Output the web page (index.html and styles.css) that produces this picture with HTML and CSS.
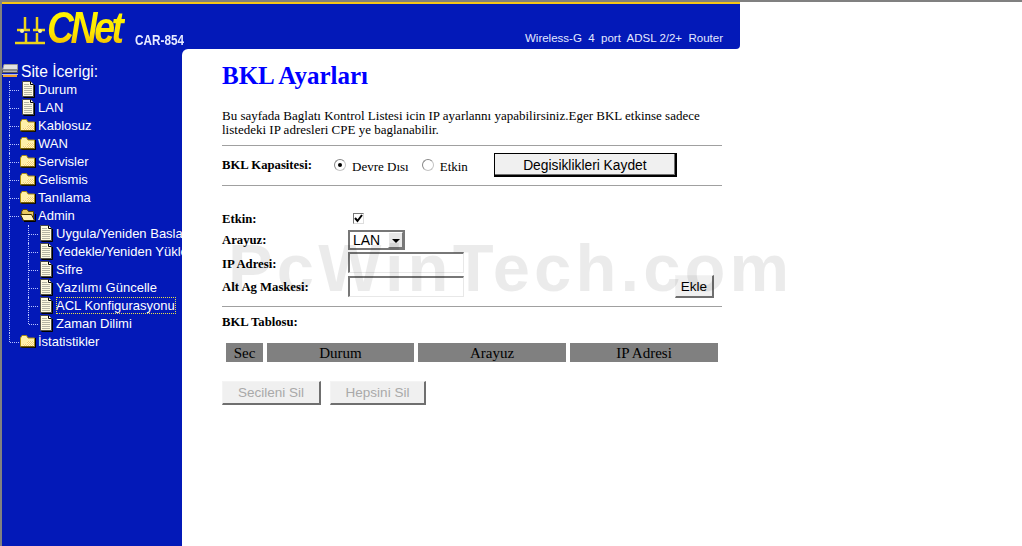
FILE: index.html
```html
<!DOCTYPE html>
<html lang="tr">
<head>
<meta charset="utf-8">
<title>BKL Ayarları</title>
<link rel="stylesheet" href="styles.css">
</head>
<body>
<svg class="defs" width="0" height="0" aria-hidden="true">
  <defs>
    <pattern id="dither" width="2" height="2" patternUnits="userSpaceOnUse">
      <rect width="2" height="2" fill="#fff6c4"/>
      <rect width="1" height="1" fill="#f5cf70"/>
      <rect x="1" y="1" width="1" height="1" fill="#f5cf70"/>
    </pattern>
    <symbol id="doc" viewBox="0 0 13 17">
      <path d="M.5 .5H8.500L11.500 3.500V15.500H.5z" fill="#fffbe0" stroke="#4a4a4a"/>
      <path d="M8.500 .5V3.500H11.500" fill="#fff" stroke="#000"/>
      <path d="M12.500 4V16.500H1.500" fill="none" stroke="#000"/>
      <path d="M2 3.500H7M2 5.500H10M2 7.500H10M2 9.500H10M2 11.500H10M2 13.500H10" stroke="#b4b4a4"/>
    </symbol>
    <symbol id="folder" viewBox="0 0 16 14">
      <path d="M.5 3V11.500H14.500V3H8L6.500 .5H2z" fill="#fff0a8" stroke="#a88c10"/>
      <path d="M7 6H14V11H3V9H7z" fill="url(#dither)"/>
      <path d="M15.500 3V12.500H1.500" fill="none" stroke="#000"/>
      <path d="M.5 12H14.500" stroke="#403000"/>
    </symbol>
    <symbol id="folder-open" viewBox="0 0 16 14">
      <path d="M1.500 3 3 .5H7L8.500 2.500H13.500V11.500H3z" fill="#e8c860" stroke="#5a4800"/>
      <path d="M.5 5.500H11.500L14.500 11.500H3.500z" fill="#fff2b8" stroke="#403000"/>
      <path d="M15.500 5V12.500H4" fill="none" stroke="#000"/>
    </symbol>
  </defs>
</svg>

<header class="banner">
  <div class="logo">
    <svg class="logo-mark" width="32" height="30" viewBox="0 0 32 30" aria-hidden="true">
      <path d="M10 1V14M2 14H15M11 17V27H0M22 1V14M18 14H30M22 17V27H13M11 27H14M22 27H30" fill="none" stroke="#efd418" stroke-width="2.500"/>
      <circle cx="7" cy="15" r="2" fill="#fff79a"/><circle cx="25" cy="15" r="2" fill="#fff79a"/>
    </svg>
    <span class="logo-word">CNet</span>
    <span class="model">CAR-854</span>
  </div>
  <div class="tagline">Wireless-G&nbsp; 4&nbsp; port&nbsp; ADSL 2/2+&nbsp; Router</div>
</header>

<div class="layout">
  <nav class="side">
    <div class="tree-root">
      <svg class="root-icon" width="18" height="14" viewBox="0 0 18 14" aria-hidden="true">
        <path d="M2 .5H15.500V6H.5z" fill="#e2e2e2" stroke="#9a9a9a"/>
        <path d="M.5 6H15.500V8.500H.5z" fill="#b8b8b8" stroke="#5a5a5a"/>
        <path d="M0 10.500H16" stroke="#fff" stroke-opacity=".7"/>
        <path d="M1 12H15" stroke="#f0a030" stroke-width="2"/>
      </svg>
      <span>Site İcerigi:</span>
    </div>
    <ul class="tree">
      <li><svg class="ico-doc"><use href="#doc"/></svg><span>Durum</span></li>
      <li><svg class="ico-doc"><use href="#doc"/></svg><span>LAN</span></li>
      <li><svg class="ico-fold"><use href="#folder"/></svg><span>Kablosuz</span></li>
      <li><svg class="ico-fold"><use href="#folder"/></svg><span>WAN</span></li>
      <li><svg class="ico-fold"><use href="#folder"/></svg><span>Servisler</span></li>
      <li><svg class="ico-fold"><use href="#folder"/></svg><span>Gelismis</span></li>
      <li><svg class="ico-fold"><use href="#folder"/></svg><span>Tanılama</span></li>
      <li class="open"><svg class="ico-fold"><use href="#folder-open"/></svg><span>Admin</span>
        <ul class="tree sub">
          <li><svg class="ico-doc"><use href="#doc"/></svg><span>Uygula/Yeniden Baslat</span></li>
          <li><svg class="ico-doc"><use href="#doc"/></svg><span>Yedekle/Yeniden Yükle</span></li>
          <li><svg class="ico-doc"><use href="#doc"/></svg><span>Sifre</span></li>
          <li><svg class="ico-doc"><use href="#doc"/></svg><span>Yazılımı Güncelle</span></li>
          <li><svg class="ico-doc"><use href="#doc"/></svg><span class="current">ACL Konfigurasyonu</span></li>
          <li><svg class="ico-doc"><use href="#doc"/></svg><span>Zaman Dilimi</span></li>
        </ul>
      </li>
      <li><svg class="ico-fold"><use href="#folder"/></svg><span>İstatistikler</span></li>
    </ul>
  </nav>

  <main class="content">
    <div class="content-inner">
      <h1 class="title">BKL Ayarları</h1>
      <p class="intro">Bu sayfada Baglatı Kontrol Listesi icin IP ayarlannı yapabilirsiniz.Eger BKL etkinse sadece listedeki IP adresleri CPE ye baglanabilir.</p>
      <hr class="rule rule-a">
      <div class="capacity">
        <b class="cap-label">BKL Kapasitesi:</b>
        <label class="radio"><span class="radio-dot on"></span>Devre Dısı</label>
        <label class="radio"><span class="radio-dot"></span>Etkin</label>
        <button class="btn btn-save" type="button">Degisiklikleri Kaydet</button>
      </div>
      <hr class="rule">
      <div class="form">
        <b>Etkin:</b>
        <div class="cell"><span class="check"><svg width="9" height="9" viewBox="0 0 9 9" aria-hidden="true"><path d="M1 4 3.500 7 8 1" fill="none" stroke="#000" stroke-width="2"/></svg></span></div>
        <b class="label-up">Arayuz:</b>
        <div class="cell"><span class="select">LAN<span class="select-arrow"></span></span></div>
        <b>IP Adresi:</b>
        <div class="cell"><span class="input"></span></div>
        <b>Alt Ag Maskesi:</b>
        <div class="cell"><span class="input"></span><button class="btn btn-add" type="button">Ekle</button></div>
      </div>
      <hr class="rule rule-c">
      <b class="table-title">BKL Tablosu:</b>
      <table class="acl">
        <tr><th class="c1">Sec</th><th class="c2">Durum</th><th class="c3">Arayuz</th><th class="c4">IP Adresi</th></tr>
      </table>
      <div class="actions">
        <button class="btn btn-off" type="button">Secileni Sil</button>
        <button class="btn btn-off btn-all" type="button">Hepsini Sil</button>
      </div>
    </div>
  </main>
</div>

<div class="watermark">PcWinTech.com</div>
</body>
</html>
```
FILE: styles.css
```css
* { box-sizing: border-box; }
html, body { margin: 0; height: 100%; }
body {
  position: relative;
  height: 546px;
  overflow: hidden;
  background: #fff;
  border-top: 2px solid #808080;
  border-left: 2px solid #808080;
  font-family: "Liberation Serif", serif;
  color: #000;
}
.defs { position: absolute; }
.banner {
  width: 738px;
  height: 47px;
  background: #0319b8;
  border-top: 2px solid #f5c518;
  border-bottom-right-radius: 4px;
  display: flex;
  justify-content: space-between;
  align-items: flex-end;
  color: #fff;
  font-family: "Liberation Sans", sans-serif;
}
.logo { display: flex; align-items: flex-start; padding-left: 13px; height: 100%; }
.logo-mark { margin-top: 12px; flex: none; }
.logo-word {
  display: block;
  width: 92px;
  margin: 2px -15px 0 0;
  padding-right: 4px;
  font-size: 44px;
  line-height: 44px;
  font-weight: bold;
  font-style: italic;
  letter-spacing: -4px;
  white-space: nowrap;
  transform: scaleX(.85);
  transform-origin: left top;
  background: linear-gradient(#fff200 20%, #ffe600 60%, #f4c400 85%);
  -webkit-background-clip: text;
  background-clip: text;
  color: transparent;
}
.model {
  display: block;
  width: 49px;
  margin: 29px 0 0 11px;
  font-size: 14px;
  line-height: 14px;
  font-weight: bold;
  color: #e6eaff;
  white-space: nowrap;
  transform: scaleX(.84);
  transform-origin: left top;
}
.tagline { font-size: 11.5px; line-height: 13px; margin: 0 17px 4px 0; color: #e4e8ff; white-space: nowrap; }
.layout {
  display: flex;
  height: 497px;
  background: linear-gradient(#0319b8, #0319b8) no-repeat 0 0 / 200px 10px;
}
.side {
  width: 180px;
  height: 497px;
  flex: none;
  background: #0319b8;
  color: #fff;
  font-family: "Liberation Sans", sans-serif;
  font-size: 13px;
  white-space: nowrap;
  overflow: hidden;
  padding-top: 14px;
}
.tree-root { display: flex; align-items: flex-start; height: 18px; font-size: 15.6px; line-height: 18px; }
.root-icon { margin: 1px 1px 0 0; flex: none; }
.tree { list-style: none; margin: 0; padding: 0 0 0 7px; }
.tree > li { position: relative; padding-left: 11px; }
.tree > li::before {
  content: "";
  position: absolute;
  left: 0;
  top: 0;
  bottom: 0;
  border-left: 1px dotted #b9c4ff;
}
.tree > li:last-child::before { bottom: auto; height: 9px; }
.tree > li::after {
  content: "";
  position: absolute;
  left: 1px;
  top: 9px;
  width: 9px;
  border-top: 1px dotted #b9c4ff;
}
.tree > li > span, .tree > li > svg { vertical-align: top; }
.tree > li > span { display: inline-block; height: 18px; line-height: 18px; }
.ico-doc { width: 13px; height: 17px; margin: 0 3px 1px 2px; }
.ico-fold { width: 16px; height: 14px; margin: 2px 2px 2px 0; }
.sub { padding-left: 8px; }
.sub > li { padding-left: 10px; }
.tree > li > span.current { height: 17px; line-height: 18px; padding-right: 1px; outline: 1px dotted #e8e04a; outline-offset: -1px; }
.content {
  flex: 1;
  background: #fff;
  border-top-left-radius: 6px;
  padding-left: 40px;
  font-size: 12px;
}
.content-inner { width: 500px; }
.title { margin: 13px 0 0; font-size: 25px; line-height: 27px; color: #0000ff; font-weight: bold; }
.intro { margin: 20px 0 0; font-size: 13px; line-height: 14px; width: 490px; }
.rule { border: 0; border-top: 1px solid #a0a0a0; margin: 0; height: 1px; }
.rule-a { margin-top: 8px; }
b { font-size: 12.7px; }
.label-up { margin-top: -2px; }
.capacity { display: flex; align-items: center; height: 39px; font-size: 13px; }
.cap-label { width: 112px; }
.radio { display: flex; align-items: center; margin-right: 13px; height: 14px; padding-top: 3px; }
.radio-dot {
  width: 12px; height: 12px; border-radius: 50%; margin: -4px 6px 0 0;
  border: 1px solid #c4c4c4; border-top-color: #888; border-left-color: #888; background: #fff;
  display: flex; align-items: center; justify-content: center;
}
.radio-dot.on::after { content: ""; width: 4px; height: 4px; background: #000; border-radius: 50%; }
.btn {
  font-family: "Liberation Sans", sans-serif;
  font-size: 13.5px;
  padding: 0;
  color: #000;
  background: #f0f0f0;
  border-style: solid;
  border-color: #f4f4f4 #6f6f6f #6f6f6f #f4f4f4;
  border-width: 1px 2px 2px 1px;
}
.btn-save {
  width: 183px; height: 24px; margin: -1px 0 0 13px;
  padding-top: 1px;
  font-size: 13.8px;
  border: 1px solid #000; border-width: 1px 2px 2px 1px;
  box-shadow: inset -1px -1px 0 #6f6f6f;
}
.form {
  display: grid;
  grid-template-columns: 126px 1fr;
  grid-template-rows: 22px 22px 24px 23px;
  align-items: center;
  margin-top: 22px;
  height: 91px;
}
.cell { display: flex; height: 100%; align-items: flex-start; }
.check {
  width: 11px; height: 11px; margin: 5px 0 0 5px; border: 1px solid #777; border-right-color: #ddd; border-bottom-color: #ddd; background: #fff;
  display: flex; align-items: center; justify-content: center;
}
.select {
  width: 57px; height: 20px; border: 2px solid #777; margin-top: 0;
  font-family: "Liberation Sans", sans-serif; font-size: 14px; line-height: 17px; padding-left: 3px; position: relative; background: #fff;
}
.select-arrow {
  position: absolute; right: 0; top: 0; width: 15px; height: 16px; background: #e8e8e8; border: 1px solid #fff; border-right-color: #777; border-bottom-color: #777;
}
.select-arrow::after {
  content: ""; position: absolute; left: 3px; top: 6px;
  border: 4px solid transparent; border-top-color: #000; border-bottom: 0;
}
.input { width: 116px; height: 21px; border: 2px solid #777; border-right: 1px solid #e8e8e8; border-bottom: 1px solid #e8e8e8; background: transparent; flex: none; }
.btn-add { width: 39px; height: 23px; margin: -1px 0 0 211px; flex: none; }
.rule-c { margin-top: 7px; }
.table-title { display: block; margin-top: 8px; line-height: 14px; }
.acl { border-collapse: separate; border-spacing: 4px; margin-top: 10px; font-size: 15px; }
.acl th { background: #808080; height: 19px; padding: 0; font-weight: normal; line-height: 16px; }
.c1 { width: 37px; } .c2 { width: 147px; } .c3 { width: 148px; } .c4 { width: 148px; }
.actions { display: flex; gap: 9px; margin-top: 15px; }
.btn-off { width: 99px; height: 24px; color: #a9a9a9; }
.btn-all { width: 96px; }
.watermark {
  position: absolute;
  left: 226px;
  top: 228px;
  font-family: "Liberation Sans", sans-serif;
  font-weight: bold;
  font-size: 67px;
  line-height: 76px;
  letter-spacing: 4.1px;
  color: rgba(0,0,0,.08);
  white-space: nowrap;
  pointer-events: none;
}
```
